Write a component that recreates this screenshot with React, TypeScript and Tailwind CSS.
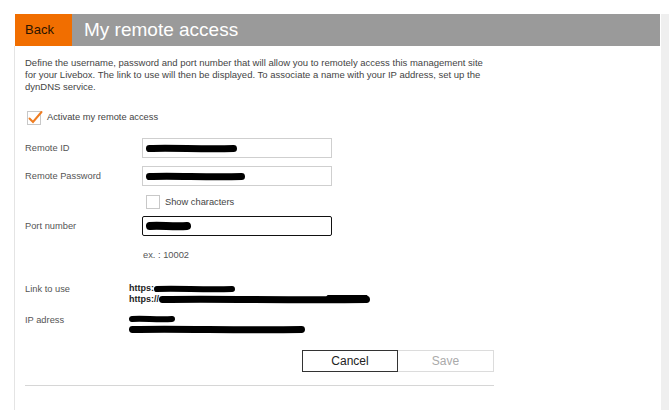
import React from "react";

const Scribble: React.FC<{ w: number; h?: number; bump?: number }> = ({ w, h = 7, bump = 0 }) => {
  const mid = h / 2 + 1;
  return (
    <svg width={w} height={h + 2} viewBox={`0 0 ${w} ${h + 2}`} className="block">
      <path
        d={`M${h / 2},${mid} C${w * 0.3},${mid - 1} ${w * 0.6},${mid + 1} ${w - h / 2},${mid}`}
        stroke="#000"
        strokeWidth={h}
        strokeLinecap="round"
        fill="none"
      />
      {bump > 0 && (
        <path
          d={`M${w - bump},${mid - 1} L${w - h / 2 - 2},${mid - 1}`}
          stroke="#000"
          strokeWidth={h + 1}
          strokeLinecap="round"
        />
      )}
    </svg>
  );
};

const Field: React.FC<{ dark?: boolean; children?: React.ReactNode }> = ({ dark, children }) => (
  <div
    className={
      dark
        ? "w-[190px] h-[20px] border-[1.5px] border-[#111] rounded-[2px] flex items-center pl-[3px]"
        : "w-[190px] h-[20px] border border-[#cfcfcf] flex items-center pl-[3px]"
    }
  >
    {children}
  </div>
);

const Label: React.FC<{ children: React.ReactNode }> = ({ children }) => (
  <div className="w-[117px] shrink-0 pt-[2px] text-[9.3px] text-[#555]">{children}</div>
);

export default function App() {
  return (
    <div className="w-[669px] h-[410px] flex bg-white overflow-hidden font-['Liberation_Sans',Arial,sans-serif]">
      <div className="w-[14px] shrink-0" />
      <div className="w-[646px] shrink-0 mt-[14px] flex flex-col">
        <div className="h-[32px] flex ml-[1px]">
          <div className="w-[57px] bg-[#f16e00] flex items-center pl-[10px] text-[13px] text-[#2a1400]">Back</div>
          <div className="flex-1 bg-[#9a9a9a] flex items-center pl-[12px] text-[19px] text-white">My remote access</div>
        </div>
        <div className="flex-1 border-l border-[#e4e4e4] pl-[10px]">
          <p className="mt-[11px] whitespace-nowrap text-[9.5px] leading-[12px] text-[#444]">
            Define the username, password and port number that will allow you to remotely access this management site
            <br />
            for your Livebox. The link to use will then be displayed. To associate a name with your IP address, set up the
            <br />
            dynDNS service.
          </p>

          <div className="mt-[17px] h-[16px] flex items-center ml-[2px]">
            <svg width="16" height="16" viewBox="0 0 16 16" className="block">
              <rect x="0.5" y="1.5" width="13" height="13" fill="#fff" stroke="#c8c8c8" />
              <path d="M2.5,8.5 L6,12 L14.5,2" stroke="#ef7d22" strokeWidth="2" fill="none" strokeLinecap="round" />
            </svg>
            <span className="ml-[4px] text-[9.3px] text-[#444]">Activate my remote access</span>
          </div>

          <div className="mt-[12px] flex items-center">
            <Label>Remote ID</Label>
            <Field>
              <Scribble w={91} />
            </Field>
          </div>

          <div className="mt-[8px] flex items-center">
            <Label>Remote Password</Label>
            <Field>
              <Scribble w={99} />
            </Field>
          </div>

          <div className="mt-[9px] h-[14px] flex items-center pl-[121px]">
            <div className="w-[14px] h-[14px] border border-[#c8c8c8] bg-white" />
            <span className="ml-[5px] pt-[2px] text-[9.3px] text-[#444]">Show characters</span>
          </div>

          <div className="mt-[7px] flex items-center">
            <Label>Port number</Label>
            <Field dark>
              <Scribble w={45} h={8} />
            </Field>
          </div>

          <div className="mt-[13px] pl-[118px] text-[9.3px] leading-[12px] text-[#555]">ex. : 10002</div>

          <div className="mt-[22px] flex">
            <div className="w-[104px] shrink-0 pt-[1px] text-[9.3px] leading-[11px] text-[#555]">Link to use</div>
            <div className="text-[9px] leading-[11px] font-bold text-[#222]">
              <div className="flex items-center">
                https:
                <Scribble w={81} h={6} />
              </div>
              <div className="flex items-center">
                https://
                <Scribble w={211} h={7} bump={40} />
              </div>
            </div>
          </div>

          <div className="mt-[8px] flex">
            <div className="w-[104px] shrink-0 pt-[2px] text-[9.3px] leading-[11px] text-[#555]">IP adress</div>
            <div className="flex flex-col">
              <div className="h-[11px] flex items-center">
                <Scribble w={46} h={6} />
              </div>
              <div className="h-[11px] flex items-center">
                <Scribble w={176} h={7} />
              </div>
            </div>
          </div>

          <div className="mt-[15px] w-[469px] flex justify-end">
            <button className="w-[96px] h-[22px] border border-[#333] bg-white text-[12px] text-[#222]">Cancel</button>
            <button className="w-[96px] h-[22px] border border-[#dcdcdc] border-l-0 bg-white text-[12px] text-[#aaa]">
              Save
            </button>
          </div>

          <div className="mt-[13px] w-[469px] border-t border-[#d6d6d6]" />
        </div>
      </div>
      <div className="flex-1 mt-[14px] ml-[1px] bg-[#efefef]" />
    </div>
  );
}
